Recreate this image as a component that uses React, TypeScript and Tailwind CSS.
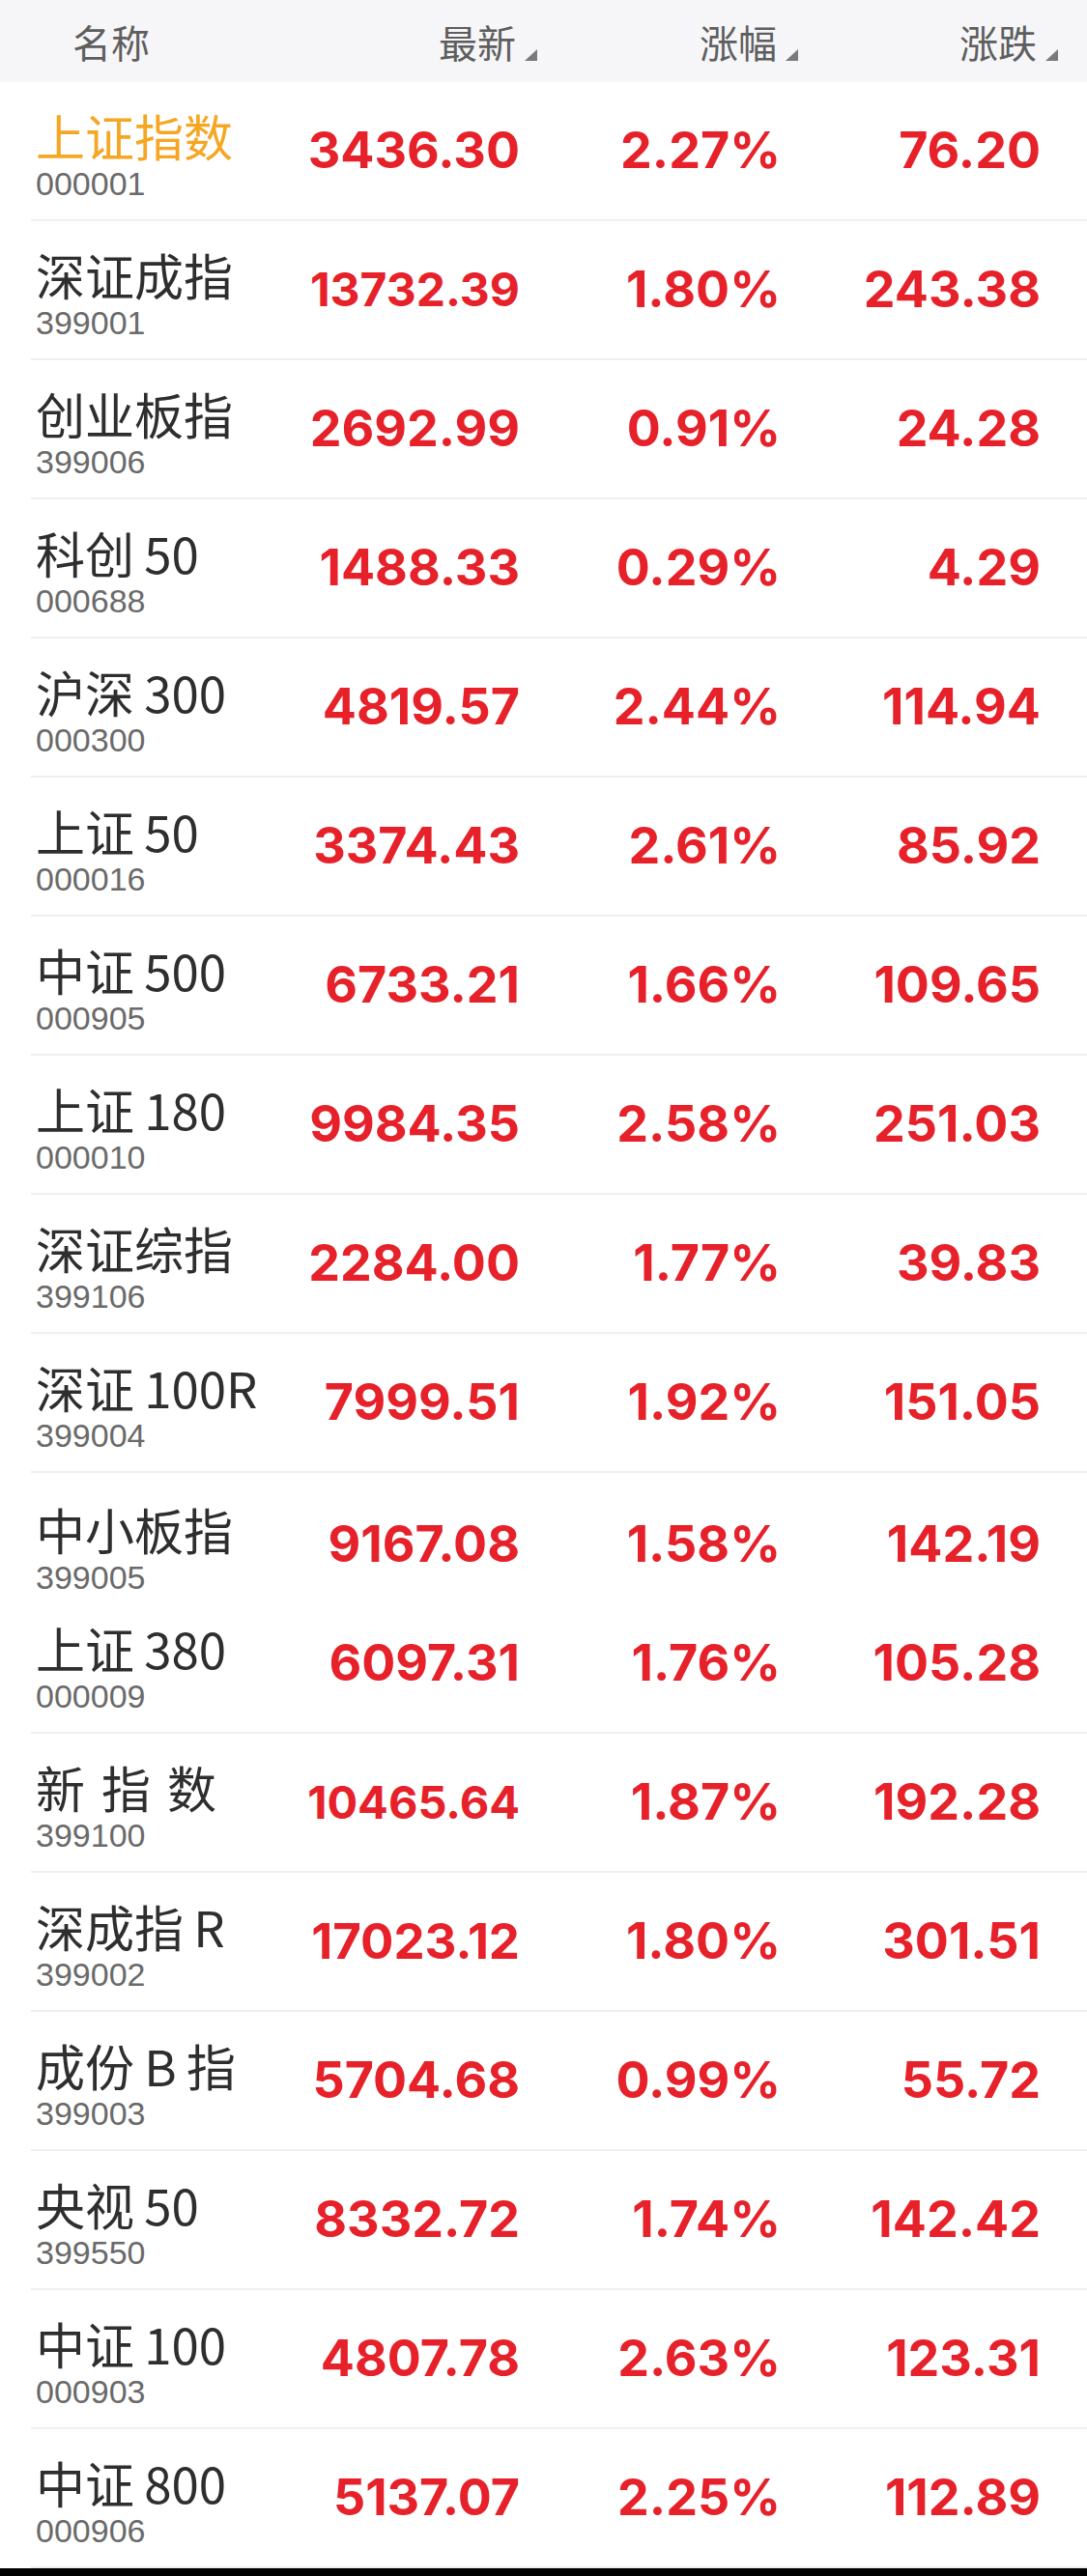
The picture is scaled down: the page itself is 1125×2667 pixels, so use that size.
import React from "react";

type Row = {
  name: string;
  code: string;
  last: string;
  pct: string;
  chg: string;
  lastCls?: string;
  highlight?: boolean;
  short?: boolean;
};

const rows: Row[] = [
  { name: "上证指数", code: "000001", last: "3436.30", pct: "2.27%", chg: "76.20", highlight: true },
  { name: "深证成指", code: "399001", last: "13732.39", pct: "1.80%", chg: "243.38", lastCls: "text-[48px]" },
  { name: "创业板指", code: "399006", last: "2692.99", pct: "0.91%", chg: "24.28" },
  { name: "科创\u200950", code: "000688", last: "1488.33", pct: "0.29%", chg: "4.29" },
  { name: "沪深\u2009300", code: "000300", last: "4819.57", pct: "2.44%", chg: "114.94" },
  { name: "上证\u200950", code: "000016", last: "3374.43", pct: "2.61%", chg: "85.92" },
  { name: "中证\u2009500", code: "000905", last: "6733.21", pct: "1.66%", chg: "109.65" },
  { name: "上证\u2009180", code: "000010", last: "9984.35", pct: "2.58%", chg: "251.03" },
  { name: "深证综指", code: "399106", last: "2284.00", pct: "1.77%", chg: "39.83" },
  { name: "深证\u2009100R", code: "399004", last: "7999.51", pct: "1.92%", chg: "151.05" },
  { name: "中小板指", code: "399005", last: "9167.08", pct: "1.58%", chg: "142.19", short: true },
  { name: "上证\u2009380", code: "000009", last: "6097.31", pct: "1.76%", chg: "105.28" },
  { name: "新\u2004指\u2004数", code: "399100", last: "10465.64", pct: "1.87%", chg: "192.28", lastCls: "text-[47px]" },
  { name: "深成指\u2009R", code: "399002", last: "17023.12", pct: "1.80%", chg: "301.51", lastCls: "text-[51px]" },
  { name: "成份\u2009B\u2009指", code: "399003", last: "5704.68", pct: "0.99%", chg: "55.72" },
  { name: "央视\u200950", code: "399550", last: "8332.72", pct: "1.74%", chg: "142.42" },
  { name: "中证\u2009100", code: "000903", last: "4807.78", pct: "2.63%", chg: "123.31" },
  { name: "中证\u2009800", code: "000906", last: "5137.07", pct: "2.25%", chg: "112.89" },
];

const cjk = "font-['Noto_Sans_CJK_SC',sans-serif]";
const code = "font-['Liberation_Sans','Noto_Sans_CJK_SC',sans-serif]";
const num = "font-['Inter','Liberation_Sans',sans-serif] font-bold text-right leading-[58px] text-[#e6212a]";

function Tri() {
  return (
    <svg width="13" height="12" viewBox="0 0 13 12" className="translate-y-[14px] ml-[9px] shrink-0">
      <polygon points="13,0 13,12 0,12" fill="#7a7a7a" />
    </svg>
  );
}

function HeadCell({ label }: { label: string }) {
  return (
    <div className="flex items-center justify-end">
      <span className={`${cjk} text-[40px] leading-[40px] text-[#5e5e5e]`}>{label}</span>
      <Tri />
    </div>
  );
}

export default function App() {
  return (
    <div className="w-[1125px] bg-white">
      <div className="h-[85px] bg-[#f6f6f8] pl-[75px] pr-[30px] grid grid-cols-[211px_270px_270px_269px] items-center">
        <span className={`${cjk} text-[40px] leading-[40px] text-[#5e5e5e]`}>名称</span>
        <HeadCell label="最新" />
        <HeadCell label="涨幅" />
        <HeadCell label="涨跌" />
      </div>
      {rows.map((r, i) => (
        <div key={i} className="pl-[32px]">
          <div
            className={`pl-[5px] pr-[48px] grid grid-cols-[231px_270px_270px_269px] items-center ${
              r.short ? "h-[126px] pt-[18px]" : "h-[144px] border-b-[2px] border-[#efefef]"
            }`}
          >
            <div className="pt-[12px] flex flex-col">
              <span
                className={`${cjk} text-[51px] leading-[56px] whitespace-nowrap ${
                  r.highlight ? "text-[#f5a623]" : "text-[#2e2e2e]"
                }`}
              >
                {r.name}
              </span>
              <span className={`${code} text-[34px] leading-[44px] text-[#6a6a6a]`}>{r.code}</span>
            </div>
            <div className={`${num} ${r.lastCls ?? "text-[52px]"}`}>{r.last}</div>
            <div className={`${num} text-[52px]`}>{r.pct}</div>
            <div className={`${num} text-[52px]`}>{r.chg}</div>
          </div>
        </div>
      ))}
      <div className="h-[8px] bg-black" />
    </div>
  );
}
